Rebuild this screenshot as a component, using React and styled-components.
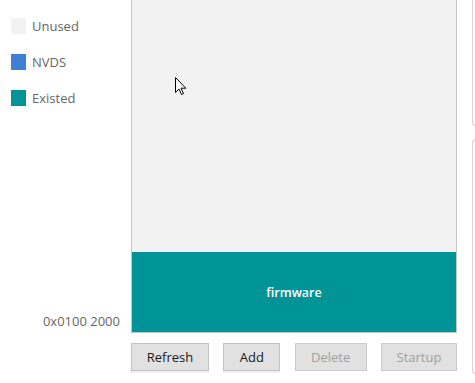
import React from 'react';
import styled, { createGlobalStyle } from 'styled-components';

const GlobalStyle = createGlobalStyle`
  html, body {
    margin: 0;
    padding: 0;
    background: #ffffff;
    overflow: hidden;
  }
  body {
    font-family: "Segoe UI", "Open Sans", "Noto Sans", sans-serif;
    font-size: 13px;
  }
`;

const legend = [
  { label: 'Unused', color: '#f2f2f2' },
  { label: 'NVDS', color: '#3f7fd5' },
  { label: 'Existed', color: '#009497' },
];

const buttons = [
  { label: 'Refresh', width: 78 },
  { label: 'Add', width: 57 },
  { label: 'Delete', width: 72, disabled: true },
  { label: 'Startup', width: 76, disabled: true },
];

const Page = styled.div`
  display: flex;
  width: 475px;
  height: 383px;
  position: relative;
  overflow: hidden;
`;

const SideColumn = styled.div`
  flex: 0 0 131px;
  height: 333px;
  display: flex;
  flex-direction: column;
  justify-content: space-between;
`;

const LegendList = styled.ul`
  list-style: none;
  margin: 0;
  padding: 18px 0 0 11px;
  display: flex;
  flex-direction: column;
  gap: 20px;
`;

const LegendItem = styled.li`
  display: flex;
  align-items: center;
  gap: 6px;
  height: 16px;
  color: #666666;
  line-height: 16px;
`;

const Swatch = styled.span`
  width: 15px;
  height: 16px;
  background: ${(p) => p.$color};
`;

const Address = styled.div`
  text-align: right;
  padding-right: 11px;
  color: #666666;
  line-height: 16px;
  margin-bottom: 4px;
`;

const MainColumn = styled.div`
  flex: 0 0 326px;
  display: flex;
  flex-direction: column;
`;

const MemoryMap = styled.div`
  height: 333px;
  box-sizing: border-box;
  border: 1px solid #c6c6c6;
  border-top: none;
  background: #f2f2f2;
  display: flex;
  flex-direction: column;
  justify-content: flex-end;
`;

const Segment = styled.div`
  height: ${(p) => p.$height}px;
  background: ${(p) => p.$color};
  color: #ffffff;
  display: flex;
  align-items: center;
  justify-content: center;
  font-weight: 600;
  font-size: 12.5px;
`;

const ButtonRow = styled.div`
  display: flex;
  justify-content: space-between;
  margin-top: 10px;
`;

const Button = styled.button`
  width: ${(p) => p.$width}px;
  height: 28px;
  box-sizing: border-box;
  border: 1px solid ${(p) => (p.disabled ? '#cccccc' : '#c2c2c2')};
  background: #e1e1e1;
  color: ${(p) => (p.disabled ? '#a0a0a0' : '#1a1a1a')};
  font-family: inherit;
  font-size: 13px;
  padding: 0;
  box-shadow: ${(p) => (p.disabled ? 'none' : '0 2px 0 #f0f0f0')};
`;

const RightColumn = styled.div`
  flex: 0 0 40px;
  margin-left: 15px;
  display: flex;
  flex-direction: column;
  gap: 13px;
`;

const Card = styled.div`
  box-sizing: border-box;
  border: 1px solid #d4d4d4;
  border-right: none;
  border-radius: 4px 0 0 4px;
  height: ${(p) => p.$height}px;
  margin-top: ${(p) => p.$offset || 0}px;
`;

const Cursor = styled.svg`
  position: absolute;
  left: 175px;
  top: 77px;
  pointer-events: none;
`;

export default function App() {
  return (
    <>
      <GlobalStyle />
      <Page>
        <SideColumn>
          <LegendList>
            {legend.map((item) => (
              <LegendItem key={item.label}>
                <Swatch $color={item.color} />
                {item.label}
              </LegendItem>
            ))}
          </LegendList>
          <Address>0x0100 2000</Address>
        </SideColumn>
        <MainColumn>
          <MemoryMap>
            <Segment $height={80} $color="#009497">firmware</Segment>
          </MemoryMap>
          <ButtonRow>
            {buttons.map((b) => (
              <Button key={b.label} $width={b.width} disabled={b.disabled}>
                {b.label}
              </Button>
            ))}
          </ButtonRow>
        </MainColumn>
        <RightColumn>
          <Card $height={136} $offset={-10} />
          <Card $height={235} />
        </RightColumn>
        <Cursor width="13" height="20" viewBox="0 0 13 20">
          <path
            d="M0.5 0.5 L0.5 15.5 L4 12 L6.5 17.5 L8.5 16.6 L6 11.2 L10.8 11.2 Z"
            fill="#ffffff"
            stroke="#000000"
            strokeWidth="1"
            strokeLinejoin="miter"
          />
        </Cursor>
      </Page>
    </>
  );
}
